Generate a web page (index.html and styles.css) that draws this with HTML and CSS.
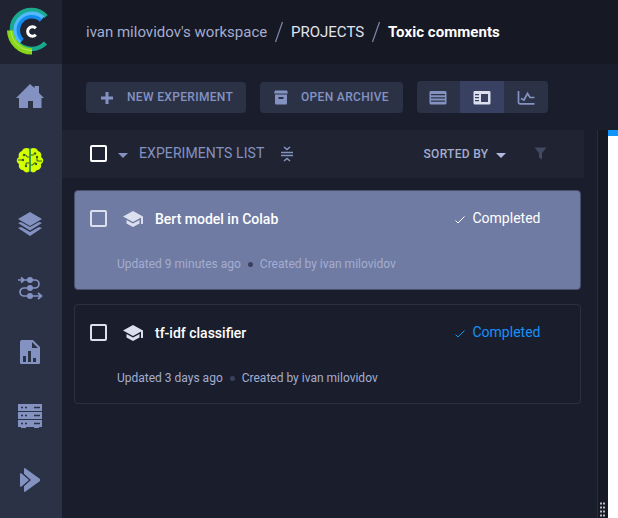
FILE: index.html
```html
<!DOCTYPE html>
<html lang="en">
<head>
<meta charset="utf-8">
<title>Toxic comments</title>
<link rel="stylesheet" href="styles.css">
</head>
<body>
<svg class="defs" width="0" height="0">
  <symbol id="cap" viewBox="0 0 22 18"><path d="M11 1 21 6.500 11 12 1 6.500ZM4.500 10 11 13.500 17.500 10V13.500L11 17 4.500 13.500ZM19 6.500H21V14H19Z"/></symbol>
  <symbol id="check" viewBox="0 0 12 10"><path d="M1.500 5.500 4 8 10.500 1.500" fill="none" stroke="currentColor" stroke-width="1"/></symbol>
</svg>
<div class="app">
  <aside class="sidebar">
    <div class="logo">
      <svg width="62" height="64">
        <path d="M46 16.500A19.500 19.500 0 1 0 45.500 43" stroke="#1aa98c" stroke-width="4.500"/>
        <path d="M43 18A16 16 0 0 0 21 42" stroke="#50b9ff" stroke-width="4.500"/>
        <path d="M41 20.500A13 13 0 0 0 22.500 40" stroke="#148aed" stroke-width="3.500"/>
        <path d="M10.200 30.500A21.500 21.500 0 0 0 32 51.300" stroke="#88d819" stroke-width="6.500"/>
        <path d="M11 30.500A20.700 20.700 0 0 0 32 50.500" stroke="#b5e86b" stroke-width="1"/>
        <path d="M35.800 28.300A4.700 4.700 0 1 0 35.800 34.700" stroke="#fff" stroke-width="3"/>
      </svg>
    </div>
    <nav>
      <a><svg width="30" height="30"><path d="M15 3 19.500 7V5H24V12L29 17H26.500V27H18V20H13V27H4V17H1Z"/></svg></a>
      <a class="active"><svg width="30" height="30"><path d="M14.500 4C12 2 8 3 7 6 4 7 3 10 4 12 1 14 1 17 4 19 3 23 6 25 8 25 10 28 13 28 14.500 26ZM15.500 4C18 2 22 3 23 6 26 7 27 10 26 12 29 14 29 17 26 19 27 23 24 25 22 25 20 28 17 28 15.500 26Z"/><path d="M15 3V27" stroke="#199b51" stroke-width="1.300"/><g fill="none" stroke="#345b35" stroke-width="1"><path d="M9 10H11L12 12H14M3 15H7M14 18H11V21M16 10H19M22 12V16H27M16 20H18L19 18H21"/></g><g fill="#345b35"><circle cx="9" cy="10" r="1.200"/><circle cx="8" cy="15" r="1.200"/><circle cx="11" cy="21" r="1.200"/><circle cx="20" cy="8.500" r="1.200"/><circle cx="22" cy="12" r="1.200"/><circle cx="21" cy="19" r="1.200"/></g></svg></a>
      <a><svg width="30" height="30"><path d="M15 3 27 10 15 17 3 10ZM3 14 6 13 15 18 24 13 27 14 15 21.500ZM3 19 6 18 15 23 24 18 27 19 15 27Z"/></svg></a>
      <a><svg width="30" height="30"><path d="M3 7H20A4 4 0 0 1 20 15H9A4 4 0 0 0 9 23H26M6 4.500 9 7 6 9.500M23 20 26.500 23 23 26" fill="none" stroke="currentColor" stroke-width="1.700"/><circle cx="15" cy="7" r="3"/><circle cx="15" cy="15" r="3"/><circle cx="15" cy="23" r="3"/></svg></a>
      <a><svg width="30" height="30"><path fill-rule="evenodd" d="M7 3H18L25 10V26Q25 27 24 27H6Q5 27 5 26V5Q5 3 7 3ZM17 5V11H23ZM8 19V25H11V19ZM13 14V25H16V14ZM18 21V25H21V21Z"/></svg></a>
      <a><svg width="30" height="30"><path d="M3 3H27V10H3ZM3 11H27V18H3ZM3 19H27V26H24V27H19V26H11V27H6V26H3Z"/><path d="M6 6.500H8M10 6.500H12M19 6.500H25M6 14.500H8M10 14.500H12M19 14.500H25M6 22.500H8M10 22.500H12M19 22.500H25" stroke="#2c3246" stroke-width="1.700"/></svg></a>
      <a><svg width="30" height="30"><path d="M9 4Q9 2.500 10.500 3.500L25 14V16L10.500 26.500Q9 27.500 9 26V21L16 15 9 9Z"/><path d="M5 9Q5 8 6.500 8.500L14 15 6.500 21.500Q5 22 5 21Z"/><path d="M8 8.500 15 15 8 21.500" fill="none" stroke="#2c3246" stroke-width="1"/></svg></a>
    </nav>
  </aside>
  <main>
    <header class="crumbs">
      <span class="workspace">ivan milovidov's workspace</span>
      <svg width="10" height="24"><path d="M1.500 22 8.500 2"/></svg>
      <span class="projects">PROJECTS</span>
      <svg width="10" height="24"><path d="M1.500 22 8.500 2"/></svg>
      <span class="current">Toxic comments</span>
    </header>
    <div class="toolbar">
      <button class="btn new"><svg width="14" height="14"><path d="M5.500 1H8.500V5.500H13V8.500H8.500V13H5.500V8.500H1V5.500H5.500Z"/></svg><span>NEW EXPERIMENT</span></button>
      <button class="btn archive"><svg width="14" height="15"><path fill-rule="evenodd" d="M1 .5H13L14 3.500H0ZM1 4.500H13V13Q13 14.500 12 14.500H2Q1 14.500 1 13ZM4.500 7V9H9.500V7Z"/></svg><span>OPEN ARCHIVE</span></button>
      <div class="views">
        <button><svg width="18" height="16"><path fill-rule="evenodd" d="M2 1H16Q17.500 1 17.500 2V13Q17.500 14.500 16 14.500H2Q.5 14.500 .5 13V2Q.5 1 2 1ZM2 4V5.300H16V4ZM2 7.200V8.500H16V7.200ZM2 10.500V11.800H16V10.500Z"/></svg></button>
        <button class="on"><svg width="18" height="16"><path fill-rule="evenodd" d="M2 1H16Q17.500 1 17.500 2V13Q17.500 14.500 16 14.500H2Q.5 14.500 .5 13V2Q.5 1 2 1ZM8 4V12H15V4ZM2 4V5.200H6V4ZM2 7V8.200H6V7ZM2 10V11.200H6V10Z"/></svg></button>
        <button><svg width="18" height="16"><path d="M1.500 1V12.500Q1.500 13.800 3 13.800H17.500M4 8.500 7 10 10.500 3.500 13 7.500H17.500" fill="none" stroke="currentColor" stroke-width="1.700"/></svg></button>
      </div>
    </div>
    <div class="workarea">
      <section class="list">
        <div class="list-head">
          <i class="box"></i>
          <i class="caret"></i>
          <span class="title">EXPERIMENTS LIST</span>
          <svg class="collapse" width="14" height="16"><path d="M1 6.500H13M1 9.500H13M4 1 7 3.500 10 1M4 15 7 12.500 10 15" fill="none" stroke="currentColor" stroke-width="1.600"/></svg>
          <span class="sort">SORTED BY</span>
          <i class="caret sort-caret"></i>
          <svg class="funnel" width="13" height="13"><path d="M.5 .5H12.500L8 6V12.500L5 10.500V6Z"/></svg>
        </div>
        <article class="card selected">
          <div class="row"><i class="box"></i><svg class="cap" width="22" height="18"><use href="#cap"/></svg><span class="name">Bert model in Colab</span><svg class="check" width="12" height="10"><use href="#check"/></svg><span class="status">Completed</span></div>
          <div class="meta"><span>Updated 9 minutes ago</span><i class="dot"></i><span>Created by ivan milovidov</span></div>
        </article>
        <article class="card">
          <div class="row"><i class="box"></i><svg class="cap" width="22" height="18"><use href="#cap"/></svg><span class="name">tf-idf classifier</span><svg class="check" width="12" height="10"><use href="#check"/></svg><span class="status">Completed</span></div>
          <div class="meta"><span>Updated 3 days ago</span><i class="dot"></i><span>Created by ivan milovidov</span></div>
        </article>
      </section>
      <div class="splitter"><svg width="6" height="16"><path d="M0 1.500H6M0 5.500H6M0 9.500H6M0 13.500H6" stroke="#b7b8be" stroke-width="2" stroke-dasharray="2 1"/></svg></div>
      <section class="detail"></section>
    </div>
  </main>
</div>
</body>
</html>
```
FILE: styles.css
```css
* { box-sizing: border-box; }
body { margin: 0; font-family: Roboto, "Liberation Sans", sans-serif; background: #1a1e2c; overflow: hidden; }
svg { display: block; fill: currentColor; flex: none; }
.defs { position: absolute; }
button { border: 0; padding: 0; font: inherit; color: inherit; background: none; }
.app { display: flex; width: 618px; height: 518px; }
.sidebar { width: 62px; background: #2c3246; color: #8492c2; flex: none; }
.logo { height: 64px; background: #202432; }
.logo svg { fill: none; }
nav a { display: flex; height: 64px; align-items: center; justify-content: center; padding-right: 2px; }
nav a:nth-child(1) { padding-left: 2px; padding-right: 4px; }
nav a.active { color: #d3ff00; }
main { flex: 1; min-width: 0; display: flex; flex-direction: column; }
.crumbs { height: 64px; background: #161823; display: flex; align-items: center; padding-left: 24px; font-size: 15px; color: #a4add0; white-space: nowrap; }
.crumbs svg { margin: 0 7px; fill: none; stroke: #7f89ac; stroke-width: 1.2; }
.projects { color: #e1e4ee; width: 73px; }
.workspace { width: 181px; }
.current { color: #fff; font-weight: 700; font-size: 15px; letter-spacing: .06px; }
.toolbar { height: 66px; display: flex; padding: 17px 0 0 24px; color: #8492c2; }
.btn { height: 31px; margin-top: 1px; border-radius: 4px; background: #2c3246; display: flex; align-items: center; font-size: 12px; font-weight: 500; letter-spacing: .33px; white-space: nowrap; }
.btn span { margin-top: -1px; }
.new { width: 160px; padding-left: 14px; margin-right: 14px; gap: 13px; }
.archive { width: 143px; padding-left: 14px; margin-right: 13.5px; gap: 13px; }
.views { display: flex; height: 32px; border-radius: 4px; overflow: hidden; background: #2c3246; }
.views button { width: 43.7px; display: flex; align-items: center; justify-content: center; padding-top: 1px; }
.views .on { background: #384161; color: #dce0ee; }
.workarea { flex: 1; display: flex; min-height: 0; }
.list { width: 535px; flex: none; }
.list-head { width: 522px; height: 48px; background: #202432; display: flex; align-items: center; padding: 0 0 1px 28px; color: #8492c2; white-space: nowrap; }
.box { width: 17px; height: 17px; border: 2px solid #dce0ee; border-radius: 2px; flex: none; }
.list-head .box { border-color: #fff; }
.caret { border: 5px solid transparent; border-top-color: #8492c2; border-bottom: 0; margin: 3px 11px 0; flex: none; }
.title { font-size: 14px; width: 126px; letter-spacing: .09px; margin-top: -1px; }
.collapse { margin-left: 14.5px; }
.sort { margin-left: 130px; font-size: 12px; font-weight: 500; letter-spacing: .3px; color: #a4add0; width: 66px; }
.sort-caret { margin: 3px 0 0 6.5px; border-top-color: #b1badc; }
.funnel { margin-left: 27.5px; color: #414963; }
.card { width: 507px; height: 100px; margin: 12px 0 0 12px; border: 1px solid #2c3040; border-radius: 4px; color: #fff; }
.card + .card { margin-top: 14px; }
.selected { background: #707ba3; border-color: #484f6b; }
.row { display: flex; height: 27px; margin-top: 14px; padding-left: 15px; align-items: center; white-space: nowrap; }
.cap { margin-left: 15px; margin-top: 1px; color: #dce0ee; }
.name { margin-left: 11px; width: 298.5px; font-size: 14px; font-weight: 500; }
.check { color: #1495ee; margin-top: 3px; }
.status { margin: -2px 0 0 7px; font-size: 14px; color: #1591fa; }
.selected .check, .selected .status { color: #fff; }
.meta { display: flex; align-items: center; margin-top: 25px; padding-left: 42px; font-size: 12px; line-height: 14px; color: #a4add0; white-space: nowrap; }
.dot { width: 5px; height: 5px; background: #39415e; border-radius: 50%; margin: 1px 7px 0; }
.splitter { width: 11px; border-left: 1px solid #292d3e; background: #161823; display: flex; align-items: flex-end; padding-left: 2px; flex: none; }
.detail { flex: 1; background: #fff; border-top: 6px solid #1096fb; }
```
